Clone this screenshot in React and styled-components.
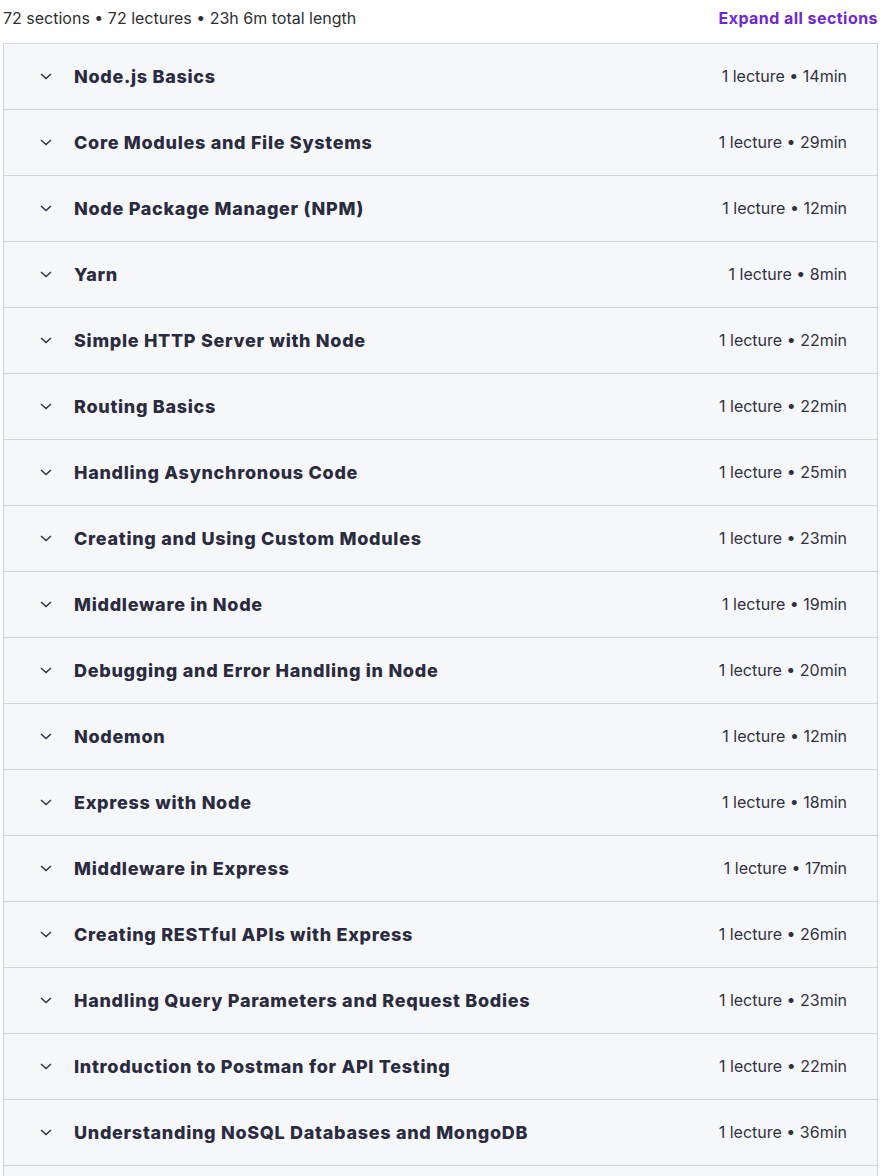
import styled, { createGlobalStyle } from 'styled-components';

const GlobalStyle = createGlobalStyle`
  body {
    margin: 0;
    background: #ffffff;
    font-family: "Inter", "Noto Sans", sans-serif;
    color: #2d2f31;
  }
`;

const sections = [
  { title: 'Node.js Basics', length: '14min' },
  { title: 'Core Modules and File Systems', length: '29min' },
  { title: 'Node Package Manager (NPM)', length: '12min' },
  { title: 'Yarn', length: '8min' },
  { title: 'Simple HTTP Server with Node', length: '22min' },
  { title: 'Routing Basics', length: '22min' },
  { title: 'Handling Asynchronous Code', length: '25min' },
  { title: 'Creating and Using Custom Modules', length: '23min' },
  { title: 'Middleware in Node', length: '19min' },
  { title: 'Debugging and Error Handling in Node', length: '20min' },
  { title: 'Nodemon', length: '12min' },
  { title: 'Express with Node', length: '18min' },
  { title: 'Middleware in Express', length: '17min' },
  { title: 'Creating RESTful APIs with Express', length: '26min' },
  { title: 'Handling Query Parameters and Request Bodies', length: '23min' },
  { title: 'Introduction to Postman for API Testing', length: '22min' },
  { title: 'Understanding NoSQL Databases and MongoDB', length: '36min' },
  { title: 'Connecting Node to MongoDB', length: '21min' },
];

const Wrapper = styled.div`
  width: 875px;
  padding: 0 4px 0 3px;
`;

const Summary = styled.div`
  display: flex;
  justify-content: space-between;
  align-items: center;
  height: 35px;
  padding-bottom: 8px;
  font-size: 16px;
  color: #2d2f31;
`;

const ExpandButton = styled.button`
  border: none;
  background: none;
  padding: 0;
  font-family: inherit;
  font-size: 16px;
  font-weight: 700;
  letter-spacing: 0.45px;
  color: #6d28d2;
  cursor: pointer;
`;

const Panel = styled.div`
  border: 1px solid #d1d7dc;
  border-bottom: none;
`;

const SectionRow = styled.div`
  display: flex;
  align-items: center;
  height: 64px;
  padding: 0 30px 1px 35px;
  background: #f6f7f9;
  border-bottom: 1px solid #d1d2e0;
  cursor: pointer;
`;

const Chevron = styled.svg`
  width: 14px;
  height: 14px;
  flex: none;
  margin-right: 21px;
`;

const SectionTitle = styled.h3`
  flex: 1;
  margin: 0;
  font-size: 18px;
  font-weight: 800;
  letter-spacing: 0.7px;
  color: #2a2b3f;
`;

const SectionMeta = styled.span`
  font-size: 16px;
  color: #303141;
`;

const ChevronIcon = () => (
  <Chevron viewBox="0 0 14 14" fill="none">
    <path d="M2 5l5 4.6L12 5" stroke="#2a2b3f" strokeWidth="1.3" />
  </Chevron>
);

export default function App() {
  return (
    <Wrapper>
      <GlobalStyle />
      <Summary>
        <span>72 sections • 72 lectures • 23h 6m total length</span>
        <ExpandButton>Expand all sections</ExpandButton>
      </Summary>
      <Panel>
        {sections.map((s) => (
          <SectionRow key={s.title}>
            <ChevronIcon />
            <SectionTitle>{s.title}</SectionTitle>
            <SectionMeta>1 lecture • {s.length}</SectionMeta>
          </SectionRow>
        ))}
      </Panel>
    </Wrapper>
  );
}
